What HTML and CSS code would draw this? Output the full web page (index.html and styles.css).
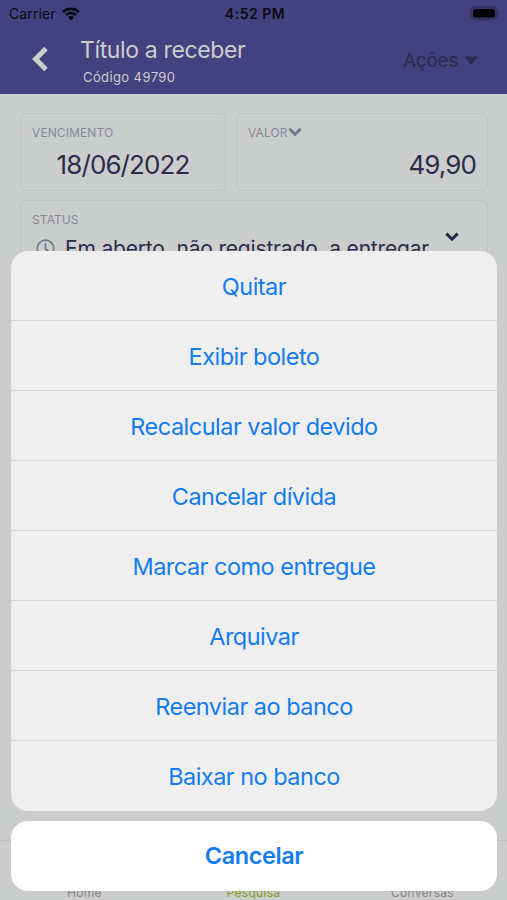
FILE: index.html
```html
<!DOCTYPE html>
<html lang="pt-BR">
<head>
  <meta charset="UTF-8">
  <meta name="viewport" content="width=device-width, initial-scale=1">
  <title>Título a receber</title>
  <link rel="stylesheet" href="styles.css">
</head>
<body>
  <div class="screen">
    <header class="header">
      <div class="status-bar">
        <div class="carrier">
          <span>Carrier</span>
          <svg class="wifi" width="18" height="14" viewBox="0 0 18 14" fill="none" stroke="#08080c" stroke-width="2.5">
            <path d="M1.1 5C5.6.8 12.4.8 16.9 5"/>
            <path d="M4 8C6.8 5.4 11.2 5.4 14 8"/>
            <path d="M9 13.4L5.9 10.3C7.7 8.7 10.3 8.7 12.1 10.3Z" fill="#08080c" stroke="none"/>
          </svg>
        </div>
        <span class="clock">4:52 PM</span>
        <svg class="battery" width="31" height="15" viewBox="0 0 31 15">
          <rect x=".8" y=".8" width="26.4" height="13" rx="4.5" fill="#39366b" stroke="#343161"/>
          <rect x="3" y="3" width="22" height="8.6" rx="2.2" fill="#000"/>
          <path d="M28.6 5.2c1.4.7 1.4 3.5 0 4.2z" fill="#302d58"/>
        </svg>
      </div>
      <div class="nav">
        <svg class="back" width="18" height="26" viewBox="0 0 18 26" fill="none" stroke="#cbcccc" stroke-width="5">
          <path d="M15 2.6L4.6 13L15 23.4"/>
        </svg>
        <div class="heading">
          <h1>Título a receber</h1>
          <p>Código 49790</p>
        </div>
        <div class="actions">
          <span>Ações</span>
          <svg width="14" height="9" viewBox="0 0 14 9" fill="#2d2b4d"><path d="M1 .5h12q1 0 .4.8L7.6 8q-.6.6-1.2 0L.6 1.3Q0 .5 1 .5z"/></svg>
        </div>
      </div>
    </header>

    <main class="content">
      <div class="card due">
        <div class="label">VENCIMENTO</div>
        <div class="value">18/06/2022</div>
      </div>
      <div class="card amount">
        <div class="label">VALOR
          <svg width="14" height="10" viewBox="0 0 14 10" fill="none" stroke="#73788a" stroke-width="3"><path d="M1.4 1.8L7 7.4L12.6 1.8"/></svg>
        </div>
        <div class="value">49,90</div>
      </div>
      <div class="card status">
        <div class="label">STATUS</div>
        <div class="status-line">
          <svg class="clock-icon" width="19" height="19" viewBox="0 0 19 19" fill="none" stroke="#73788a" stroke-width="1.7">
            <circle cx="9.5" cy="9.5" r="8.3"/>
            <path d="M9.5 4.2v5.8l3.2 2.3"/>
          </svg>
          <span class="status-text">Em aberto, não registrado, a entregar</span>
        </div>
        <svg class="status-arrow" width="14" height="10" viewBox="0 0 14 10" fill="none" stroke="#252845" stroke-width="3"><path d="M1.4 1.6L7 7.2L12.6 1.6"/></svg>
      </div>
    </main>

    <nav class="tabs">
      <span>Home</span>
      <span class="active">Pesquisa</span>
      <span>Conversas</span>
    </nav>
  </div>

  <div class="sheet">
    <div class="options">
      <button>Quitar</button>
      <button>Exibir boleto</button>
      <button>Recalcular valor devido</button>
      <button>Cancelar dívida</button>
      <button>Marcar como entregue</button>
      <button>Arquivar</button>
      <button>Reenviar ao banco</button>
      <button>Baixar no banco</button>
    </div>
    <button class="cancel">Cancelar</button>
  </div>
</body>
</html>
```
FILE: styles.css
```css
:root {
  --header: #454180;
  --page: #cbcccc;
  --border: #c0c2c4;
  --text: #2b2d4b;
  --muted: #858a98;
  --blue: #147bf0;
}
* {
  box-sizing: border-box;
  margin: 0;
  padding: 0;
}
body {
  font-family: Inter, "Liberation Sans", sans-serif;
  background: var(--page);
  height: 900px;
  overflow: hidden;
}
svg {
  display: block;
  flex: none;
}
.screen {
  height: 900px;
  display: flex;
  flex-direction: column;
}
.header {
  height: 94px;
  background: var(--header);
}
.status-bar {
  height: 27px;
  display: grid;
  grid-template-columns: 1fr auto 1fr;
  align-items: center;
  padding: 0 6px 0 9px;
  font-size: 14px;
  line-height: 27px;
  color: #0b0b12;
}
.carrier {
  display: flex;
  align-items: center;
  gap: 6px;
  letter-spacing: 0.1px;
}
.clock {
  font-weight: 600;
  letter-spacing: 0.5px;
}
.battery {
  justify-self: end;
}
.nav {
  display: flex;
  height: 67px;
  padding: 0 29px 0 31px;
}
.back {
  margin-top: 19px;
}
.heading {
  margin: 7px 0 0 31px;
  color: #cbcccc;
}
.heading h1 {
  font-size: 23px;
  font-weight: 400;
  line-height: 32px;
  letter-spacing: -0.36px;
}
.heading p {
  margin-left: 3px;
  font-size: 13px;
  line-height: 22px;
  letter-spacing: 0.4px;
}
.actions {
  display: flex;
  align-items: center;
  gap: 6px;
  height: 28px;
  margin: 19px 0 0 auto;
  font-size: 19px;
  letter-spacing: -0.3px;
  color: #2d2b4d;
}
.content {
  flex: 1;
  display: grid;
  grid-template-columns: 206px 1fr;
  grid-template-rows: 78px 88px;
  gap: 9px 10px;
  padding: 19px 19px 0 20px;
}
.card {
  border: 1.5px solid var(--border);
  border-radius: 6px;
  padding: 10px 11px 0;
}
.label {
  display: flex;
  align-items: center;
  height: 16px;
  font-size: 12px;
  letter-spacing: 0.1px;
  color: var(--muted);
}
.value {
  margin-top: 7px;
  font-size: 26px;
  line-height: 36px;
  letter-spacing: -0.9px;
  color: var(--text);
  text-align: center;
}
.amount .value {
  text-align: right;
}
.status {
  grid-column: 1 / 3;
  display: grid;
  grid-template-columns: 1fr auto;
  grid-template-rows: 16px 42px;
  padding-right: 28px;
}
.status-line {
  grid-row: 2;
  display: flex;
  align-items: center;
  gap: 10px;
  padding-left: 4px;
}
.status-text {
  font-size: 21px;
  letter-spacing: -0.17px;
  color: var(--text);
  white-space: nowrap;
}
.status-arrow {
  grid-column: 2;
  grid-row: 1 / 3;
  margin-top: 21px;
}
.tabs {
  height: 60px;
  border-top: 1px solid #bebfbf;
  display: grid;
  grid-template-columns: repeat(3, 1fr);
  align-items: end;
  text-align: center;
  font-size: 12px;
  line-height: 14px;
  letter-spacing: 0.3px;
  color: #848585;
}
.tabs .active {
  color: #7f9c25;
}
/* action sheet over the dimmed screen */
.sheet {
  position: absolute;
  top: 251px;
  left: 11px;
  width: 486px;
}
.options {
  height: 560px;
  border-radius: 17px;
  overflow: hidden;
  background: #efefef;
}
.sheet button {
  display: block;
  width: 100%;
  height: 70px;
  border: 0;
  background: none;
  font-family: inherit;
  font-size: 23.5px;
  letter-spacing: -0.52px;
  color: var(--blue);
}
.options button:not(:last-child) {
  padding-top: 2px;
  border-bottom: 1px solid #d6d6d7;
}
.sheet .cancel {
  height: 70px;
  margin-top: 9.5px;
  border-radius: 17px;
  background: #fff;
  font-weight: 600;
  letter-spacing: -0.4px;
}
```
